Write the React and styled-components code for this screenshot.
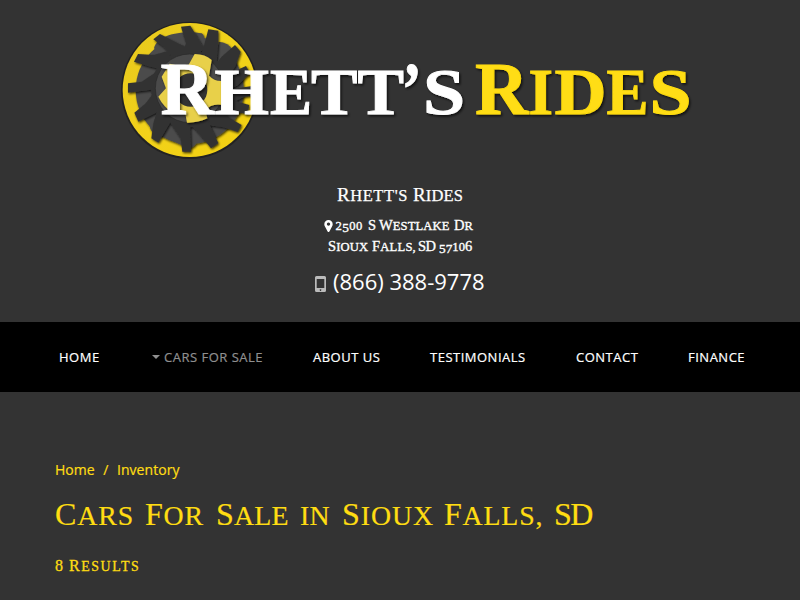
import React from "react";
import styled, { createGlobalStyle } from "styled-components";

const GlobalStyle = createGlobalStyle`
  * { box-sizing: border-box; }
  body {
    margin: 0;
    background: #333;
    color: #fff;
    font-family: "Open Sans", "Noto Sans", sans-serif;
    overflow: hidden;
  }
`;

const Page = styled.div`
  display: flex;
  flex-direction: column;
  height: 600px;
  background: #333;
`;

const Header = styled.header`
  display: flex;
  flex-direction: column;
  align-items: center;
  height: 322px;
`;

const Logo = styled.svg`
  display: block;
  width: 800px;
  height: 180px;
  font-family: "Liberation Serif", serif;
  font-weight: 700;
`;

const Line = styled.div`
  display: flex;
  justify-content: flex-start;
  white-space: pre;
  align-items: baseline;
  font-family: "Liberation Serif", serif;
  width: ${(p) => p.$w}px;
  height: ${(p) => p.$h}px;
  margin-top: ${(p) => p.$top || 0}px;
  font-size: ${(p) => p.$size}px;
  line-height: ${(p) => p.$h}px;
  -webkit-text-stroke: ${(p) => p.$stroke || 0}px currentColor;
`;

const Word = styled.span`
  flex: 0 0 ${(p) => p.$w}px;
  letter-spacing: ${(p) => p.$ls || 0}px;
`;

const Small = styled.span`
  font-size: 0.87em;
  line-height: 1;
`;

const Low = styled.span`
  position: relative;
  top: 0.14em;
  font-size: 0.92em;
  line-height: 1;
`;

const PinIcon = styled.svg`
  flex: none;
  align-self: center;
  width: 9px;
  height: 12px;
  margin-right: 3px;
`;

const Phone = styled.a`
  display: flex;
  align-items: center;
  width: 170px;
  height: 30px;
  margin-top: 9px;
  font-size: 22px;
  line-height: 30px;
  white-space: nowrap;
`;

const PhoneIcon = styled.svg`
  flex: none;
  width: 11px;
  height: 16px;
  margin: 5px 7px 0 0;
`;

const Nav = styled.nav`
  display: flex;
  align-items: center;
  height: 70px;
  padding-left: 59px;
  background: #000;
`;

const NavItem = styled.a`
  display: flex;
  align-items: center;
  flex: 0 0 ${(p) => p.$w}px;
  font-size: 13px;
  line-height: 20px;
  letter-spacing: 0.5px;
  white-space: nowrap;
  -webkit-text-stroke: 0.2px currentColor;
  color: ${(p) => (p.$active ? "#8f8f8f" : "#fff")};
`;

const Caret = styled.span`
  margin-right: 4px;
  border: 4px solid transparent;
  border-top-color: currentColor;
  border-bottom: 0;
`;

const Main = styled.main`
  padding: 68px 55px 0;
  color: #ffdd12;
`;

const Breadcrumbs = styled.div`
  display: flex;
  gap: 8.5px;
  font-size: 14px;
  line-height: 20px;
  letter-spacing: 0.05px;
  -webkit-text-stroke: 0.2px currentColor;
`;

const Title = styled.h1`
  margin: 13px 0 0;
  font-weight: 400;
`;

const Results = styled.h2`
  margin: 20px 0 0;
  font-weight: 400;
`;

/* Splits a word in capitals and small capitals; old-style digits sit low. */
function SmallCaps({ children }) {
  return children.split("").map((ch, i) => {
    if (/[a-z.,']/.test(ch)) return <Small key={i}>{ch.toUpperCase()}</Small>;
    if (/[012]/.test(ch)) return <Small key={i}>{ch}</Small>;
    if (/[57]/.test(ch)) return <Low key={i}>{ch}</Low>;
    return ch;
  });
}

function Words({ items }) {
  return items.map(([text, w, ls], i) => (
    <Word key={i} $w={w} $ls={ls}>
      <SmallCaps>{text}</SmallCaps>
    </Word>
  ));
}

const WHITE = [
  ["R", 160.5, 53.5, 75],
  ["H", 214.5, 54.5, 65],
  ["E", 270, 42, 65],
  ["T", 311, 46.5, 65],
  ["T", 357.5, 46.5, 65],
  ["’", 402, 19.5, 74],
  ["S", 423, 42, 65],
];
const YELLOW = [
  ["R", 475, 53.5, 75],
  ["I", 528.5, 24.5, 65],
  ["D", 554.5, 52, 65],
  ["E", 606.5, 42, 65],
  ["S", 649.5, 42, 65],
];

function Letters({ list, fill }) {
  return (
    <text y="114.3" fill={fill} stroke={fill} strokeWidth="0.9" filter="url(#drop)">
      {list.map(([ch, x, w, size], i) => (
        <tspan key={i} x={x} fontSize={size} textLength={w} lengthAdjust="spacingAndGlyphs">
          {ch}
        </tspan>
      ))}
    </text>
  );
}

const TEETH = [
  "213,50 241,47 258,75 283,118 250,140 215,135 228,100",
  "295,58 325,62 325,95 320,155 275,130 284,100",
  "375,105 392,125 376,170 350,208 315,165 335,140",
  "408,168 420,190 385,225 345,245 330,205 360,190",
  "428,228 430,256 400,262 345,290 340,240",
  "418,285 412,312 370,305 325,310 345,265",
  "395,345 383,366 340,352 290,345 330,295 360,325",
  "325,400 303,415 275,380 235,335 295,335",
  "243,425 217,425 212,385 175,330 240,335",
  "145,398 124,385 130,340 145,290 185,330",
  "85,335 73,308 105,282 138,240 155,300 125,315",
  "54,248 54,220 95,215 155,175 145,235 120,240",
  "72,155 84,132 130,135 185,120 165,180 120,170",
  "130,88 150,72 185,90 240,118 195,150 160,110",
];

function LogoArt() {
  return (
    <Logo viewBox="0 0 800 180" role="img">
      <defs>
        <filter id="drop" x="-10%" y="-20%" width="120%" height="150%">
          <feDropShadow dx="1.5" dy="1.8" stdDeviation="1" floodColor="#000" floodOpacity="0.65" />
        </filter>
        <filter id="tooth" x="-10%" y="-10%" width="120%" height="120%">
          <feDropShadow dx="3" dy="4" stdDeviation="3" floodColor="#000" floodOpacity="0.75" />
        </filter>
        <linearGradient id="gold" x1="0" y1="0" x2="1" y2="1">
          <stop offset="0" stopColor="#e6c81e" />
          <stop offset="0.5" stopColor="#f2d21a" />
          <stop offset="1" stopColor="#f2d010" />
        </linearGradient>
      </defs>
      <g transform="translate(110 10) scale(0.33333)">
        <circle cx="239" cy="241" r="206" fill="#222" />
        <circle cx="239" cy="240" r="201" fill="url(#gold)" />
        <g filter="url(#tooth)">
          <circle cx="239" cy="240" r="162" fill="#4c4c4c" />
          <path d="M132 115 C140 70 230 60 275 70 Q290 80 278 120 L240 150 L150 130Z" fill="#4c4c4c" />
          <path d="M120 325 Q110 375 160 380 L235 415 Q270 410 260 365 L220 320Z" fill="#4c4c4c" />
          <path d="M325 95 Q355 95 372 125 L330 170Z" fill="#4c4c4c" />
        </g>
        <g fill="#333" filter="url(#tooth)">
          {TEETH.map((points) => (
            <polygon key={points} points={points} />
          ))}
          <circle cx="239" cy="236" r="116" />
        </g>
        <circle cx="239" cy="235" r="103" fill="#4a4a4a" stroke="#292929" strokeWidth="2" />
        <path
          d="M236 164 L254 132 Q286 132 305 150 L297 197 Q315 216 341 212 Q345 245 333 284 Q302 280 286 302 L292 325 Q262 339 231 338 L225 305 L190 310 Q160 290 145 260 L168 235 L155 200 L179 161 Q205 170 236 164Z"
          fill="#e8d04a"
          filter="url(#tooth)"
        />
        <circle cx="242" cy="240" r="50" fill="#333" />
      </g>
      <Letters list={WHITE} fill="#fff" />
      <Letters list={YELLOW} fill="#ffdd12" />
    </Logo>
  );
}

export default function App() {
  return (
    <>
      <GlobalStyle />
      <Page>
        <Header>
          <LogoArt />
          <Line $w={126} $h={30} $size={19} $stroke={0.25}>
            <Words items={[["Rhett's", 76, 0.55], ["Rides", 50, 0.1]]} />
          </Line>
          <Line $w={153} $h={21} $size={14.5} $stroke={0.35} $top={5}>
            <PinIcon viewBox="0 0 9 12">
              <path
                fillRule="evenodd"
                fill="#fff"
                d="M4.5 0A4.2 4.2 0 0 1 8.7 4.2C8.7 5.3 8.2 6 7.9 6.7L5.4 11.4Q4.5 12.5 3.6 11.4L1.1 6.7C.8 6 .3 5.3 .3 4.2A4.2 4.2 0 0 1 4.5 0ZM4.5 2.5A1.6 1.6 0 1 0 4.51 2.5Z"
              />
            </PinIcon>
            <Words items={[["2500", 32.5, 0.4], ["S", 11, 0], ["Westlake", 75, 0.1], ["Dr", 20, 0]]} />
          </Line>
          <Line $w={144} $h={21} $size={14.5} $stroke={0.35}>
            <Words items={[["Sioux", 44, 0.1], ["Falls,", 46, 0.2], ["SD", 21, -0.5], ["57106", 33, 0]]} />
          </Line>
          <Phone>
            <PhoneIcon viewBox="0 0 11 16">
              <path
                fillRule="evenodd"
                fill="#bbb"
                d="M1.5 0h8Q11 0 11 1.5v13Q11 16 9.5 16h-8Q0 16 0 14.5v-13Q0 0 1.5 0ZM1.7 3v9h7.6V3ZM5.5 13.2a.8.8 0 1 0 .01 0Z"
              />
            </PhoneIcon>
            (866) 388-9778
          </Phone>
        </Header>
        <Nav>
          <NavItem $w={93}>HOME</NavItem>
          <NavItem $w={161} $active>
            <Caret />
            CARS FOR SALE
          </NavItem>
          <NavItem $w={117}>ABOUT US</NavItem>
          <NavItem $w={146}>TESTIMONIALS</NavItem>
          <NavItem $w={112}>CONTACT</NavItem>
          <NavItem $w={60}>FINANCE</NavItem>
        </Nav>
        <Main>
          <Breadcrumbs>
            <span>Home</span>
            <span>/</span>
            <span>Inventory</span>
          </Breadcrumbs>
          <Title>
            <Line $w={600} $h={42} $size={32} $stroke={0.2}>
              <Words
                items={[
                  ["Cars", 90, 0.9],
                  ["For", 71, 0.8],
                  ["Sale", 84, 0.2],
                  ["in", 42, 0.3],
                  ["Sioux", 102, 0.9],
                  ["Falls,", 110, 0.8],
                  ["SD", 50, -1.5],
                ]}
              />
            </Line>
          </Title>
          <Results>
            <Line $w={200} $h={22} $size={16} $stroke={0.3}>
              <Words items={[["8", 14, 0], ["Results", 80, 1.55]]} />
            </Line>
          </Results>
        </Main>
      </Page>
    </>
  );
}
